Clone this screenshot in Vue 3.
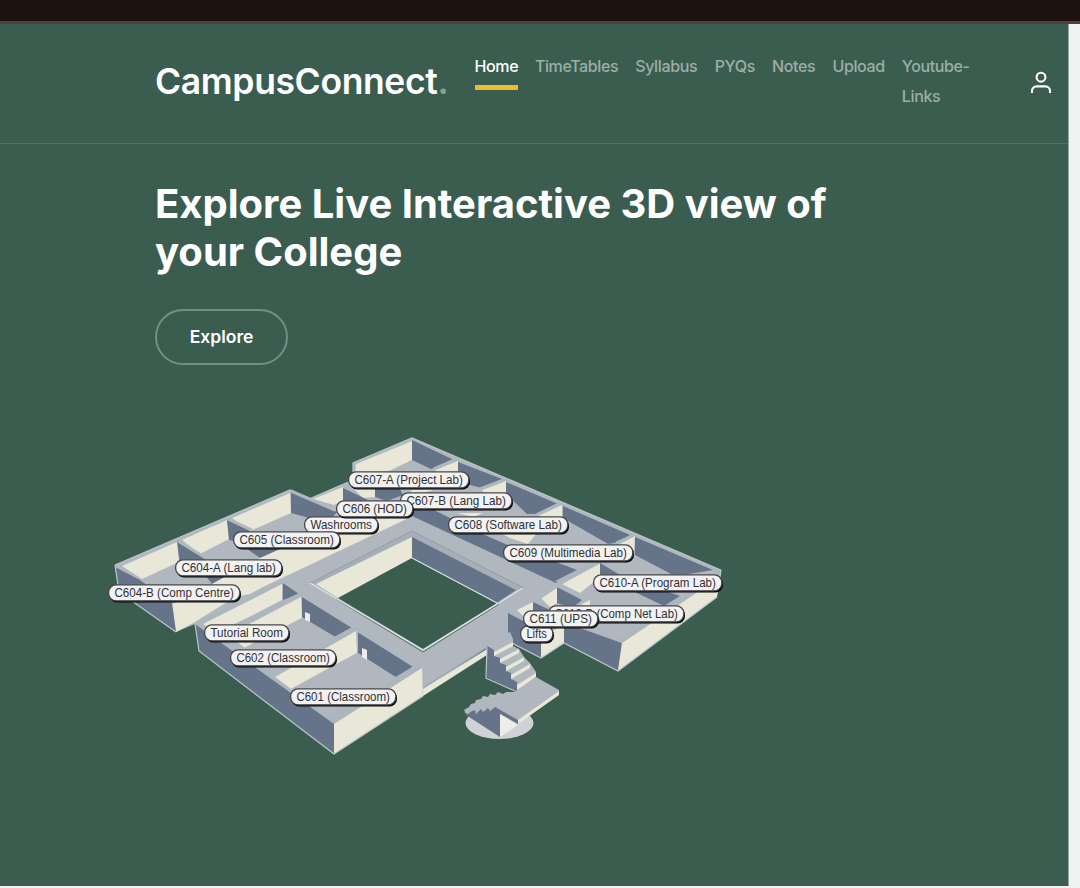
<script setup>
const nav = [
  { label: 'Home', w: 43 }, { label: 'TimeTables', w: 83 }, { label: 'Syllabus', w: 62 },
  { label: 'PYQs', w: 40 }, { label: 'Notes', w: 43 }, { label: 'Upload', w: 52 }, { label: 'Youtube-Links', w: 68 },
]
const C = 'cream', B = 'blue', G = 'floor', T = 'top'
const shapes = [
  [G, '412,438 721,570 720,577 717,597 618,671 564,643 541,658 508,641 487,648 423,690 334,754 199,651 195,624 176,632 119,592 115,565 290,490 309,499 353,480 353,463'],
  // upper rooms
  [C, '356,464 412,441 412,460 368,481 355,474'],
  [B, '412,440 454,460 447,464 431,469 412,460'],
  [C, '435,470 458,461 458,474 440,480'],
  [B, '458,462 502,479 482,488 470,485 458,474'],
  [C, '482,490 506,481 506,494 490,502'],
  [C, '457,513 483,513 473,517'],
  [B, '506,482 558,504 537,514 527,514 506,494'],
  [C, '538,516 562,505 562,517 552,523'],
  [C, '500,533 537,533 528,544 510,538'],
  [B, '563,506 630,535 620,542 608,544 563,518'],
  [C, '618,545 635,536 634,550'],
  [B, '635,537 713,570 683,575 673,575 635,555'],
  [C, '352,487 375,487 375,497 363,498'],
  [B, '375,489 400,489 403,495 387,501 375,497'],
  [C, '412,490 434,490 407,497'],
  [B, '412,504 420,503 450,518 480,533 510,546 540,556 577,570 556,583 412,516'],
  [C, '562,584 600,563 600,577 580,593'],
  [T, '555,581 597,560 601,563 562,584'],
  [B, '600,563 620,575 680,596 664,606 635,592 600,577'],
  [C, '540,597 557,587 557,603 550,607'],
  [B, '557,587 582,600 572,608 557,603'],
  [C, '580,605 590,600 590,607'],
  [C, '517,610 533,602 533,612 523,616'],
  [B, '533,602 552,611 543,614 533,612'],
  [B, '508,613 525,622 541,636 541,658 508,641'],
  [C, '541,637 564,625 564,643 541,658'],
  [B, '564,620 577,627 622,643 618,671 564,643'],
  [C, '622,643 717,577 720,576 717,597 618,671'],
  [T, '614,640 712,576 721,570 720,577 622,643'],
  // left wing
  [C, '122,566 177,542 179,562 142,579'],
  [C, '182,540 227,520 229,539 200,554'],
  [C, '232,518 290,493 291,513 250,531'],
  [B, '177,541 213,564 180,564'],
  [B, '227,520 250,531 240,542 229,540'],
  [B, '291,492 337,512 330,520 313,519 291,513'],
  [C, '313,499 343,487 343,501 334,505'],
  [B, '343,488 368,500 350,504 343,501'],
  [B, '205,575 228,575 212,584'],
  [B, '246,548 287,548 260,558'],
  [C, '212,584 260,558 300,540 345,530 375,517 413,516 263,587 250,594 212,601'],
  [C, '172,604 212,590 262,580 195,622 176,632'],
  [B, '115,567 140,580 172,603 176,632 119,592'],
  // lower wing
  [T, '195,623 281,582 335,716 334,724'],
  [C, '203,624 282,584 282,600 232,626 215,632'],
  [B, '283,583 299,594 283,600'],
  [T, '220,631 299,593 303,597 228,638'],
  [C, '228,635 301,597 302,618 245,648'],
  [B, '302,597 352,628 337,638 302,617'],
  [G, '302,618 337,638 271,672 240,650'],
  [T, '269,673 352,627 357,631 276,677'],
  [C, '275,677 356,631 357,653 291,689'],
  [B, '358,632 413,667 397,678 358,653'],
  [G, '357,653 397,678 328,718 291,689'],
  [T, '328,718 417,664 422,668 334,724'],
  [C, '334,724 422,668 423,696 334,754'],
  [B, '195,624 334,724 334,754 199,651'],
  ['door', '305,612 310,614 310,622 305,620'],
  ['door', '362,648 367,650 367,660 362,657'],
  // courtyard
  ['band', '310,583 412,531 524,588 518,591 412,537 317,584'],
  [C, '316,584 412,537 412,558 338,598'],
  [B, '412,537 516,590 497,603 412,558'],
  ['green', '338,598 412,558 497,603 423,649'],
  [C, '423,689 487,649 487,655 423,696'],
]
const stairs = [
  [G, '487,643 510,632 513,639 513,646 519,649 524,657 530,663 536,672 536,677 517,692 494,656'],
  [B, '487,646 494,650 494,656 500,658 500,663 506,665 506,671 511,673 511,679 517,682 517,692 487,677'],
  [C, '494,652 513,642 513,646 494,656'],
  [C, '500,659 519,649 519,653 500,663'],
  [C, '506,667 524,657 524,661 506,671'],
  [C, '511,675 530,664 530,668 511,679'],
  [C, '517,685 536,673 536,677 517,690'],
  [G, '464,710 469,707 471,704 475,703 476,700 481,699 483,696 488,697 490,694 495,695 498,692 503,694 506,692 515,692 536,677 559,690 559,694 518,722 495,712 466,714'],
  [B, '464,712 469,715 470,712 475,710 476,714 481,709 483,712 488,708 490,711 495,707 518,720 518,724 500,714 500,737 466,715'],
  [C, '518,720 559,691 559,695 518,724'],
  ['white', '500,714 518,725 500,737'],
]
const labels = [
  ['C607-B (Lang Lab)', 400, 493, 112], ['C607-A (Project Lab)', 348, 472, 121],
  ['Washrooms', 304, 517, 74], ['C606 (HOD)', 336, 501, 77], ['C605 (Classroom)', 233, 532, 107],
  ['C608 (Software Lab)', 448, 517, 120], ['C604-A (Lang lab)', 175, 560, 107],
  ['C609 (Multimedia Lab)', 503, 545, 130], ['C610-A (Program Lab)', 593, 575, 129],
  ['C604-B (Comp Centre)', 108, 585, 132], ['C610-B (Comp Net Lab)', 548, 606, 136],
  ['Lifts', 520, 626, 33], ['C611 (UPS)', 523, 611, 75],
  ['Tutorial Room', 204, 625, 85], ['C602 (Classroom)', 230, 650, 106], ['C601 (Classroom)', 290, 689, 106],
]
</script>

<template>
  <div class="screen">
    <div class="topbar"></div>
    <main>
      <header>
        <div class="logo">CampusConnect<span>.</span></div>
        <nav>
          <a v-for="(n, i) in nav" :key="n.label" :class="{ active: i === 0 }" :style="{ width: n.w + 'px' }">{{ n.label }}</a>
        </nav>
        <svg class="user" width="22" height="24" viewBox="0 0 22 24">
          <circle cx="11" cy="6.2" r="4.4" />
          <path d="M2 22v-2.2a4.4 4.4 0 0 1 4.4-4.4h9.2a4.4 4.4 0 0 1 4.4 4.4V22" />
        </svg>
      </header>
      <section>
        <h1>Explore Live Interactive 3D view of your College</h1>
        <button>Explore</button>
      </section>
      <svg class="plan" width="1068" height="486" viewBox="0 400 1068 486">
        <polygon v-for="(s, i) in shapes" :key="i" :class="s[0]" :points="s[1]" />
        <path class="edge" d="M115 565L290 490L309 499L353 480M353 474V463L412 438L721 570L720 577M717 597L618 671L564 643L541 658L508 641M115 565L119 592L176 632M195 624L199 651L334 754L423 696" />
        <path class="thin" d="M310 583L412 531L524 588M423 688L487 647" />
        <path class="wallcap" d="M178 541L214 563M228 519L252 530M291 491L335 510M302 595L354 627M357 630L415 666M284 582L300 592M556 585L584 598M600 561L623 573M535 601L557 586" />
        <path class="wallcap" d="M434 469L457 459M480 489L504 480M536 515L561 503M616 543L634 535" />
        <path class="shade" d="M336 599L423 652L499 604" />
        <path class="rim" d="M310 583L423 650L523 588M412 558L497 603" />
        <ellipse class="disc" cx="499.500" cy="723" rx="34" ry="16" />
        <polygon v-for="(s, i) in stairs" :key="'s' + i" :class="s[0]" :points="s[1]" />
        <path class="edge" d="M487 647L486 678L517 692" />
        <g v-for="l in labels" :key="l[0]">
          <rect class="drop" :x="l[1] + 1.5" :y="l[2] + 1.4" :width="l[3] - 0.5" height="16" rx="7.5" />
          <rect class="pill" :x="l[1] + 0.6" :y="l[2] - 0.2" :width="l[3] - 0.8" height="16" rx="7.5" />
          <text :x="l[1] + 6.4" :y="l[2] + 12.2" :textLength="l[3] - 12.5" lengthAdjust="spacingAndGlyphs">{{ l[0] }}</text>
        </g>
      </svg>
    </main>
  </div>
</template>

<style>
body { background: #f0f2f1; overflow: hidden; }
</style>
<style scoped>
.screen { width: 1080px; height: 888px; overflow: hidden; background: #f0f2f1; font-family: Inter, sans-serif; }
.topbar { height: 24px; box-sizing: border-box; background: #1c110f; border-bottom: 3px solid #4d413d; }
main { width: 1069px; height: 862px; box-sizing: border-box; background: #3b5d50; border-right: 1px solid #91a69e; overflow: hidden; }
header { height: 120px; box-sizing: border-box; border-bottom: 1px solid #4e6f62; display: flex; padding-left: 155px; }
.logo { width: 320px; flex: none; margin-top: 36px; font-size: 35.5px; letter-spacing: -0.38px; line-height: 44px; font-weight: 600; color: #fff; white-space: nowrap; }
.logo span { color: #87a096; }
nav { display: flex; gap: 17.4px; margin-top: 27px; height: 70px; width: 556px; flex: none; margin-left: -0.5px; }
nav a { flex: none; color: #9daea7; font-size: 16px; letter-spacing: -0.38px; line-height: 30px; font-weight: 500; }
nav a.active { color: #fff; height: 34px; border-bottom: 5px solid #edbd2e; }
.user { margin-top: 47px; flex: none; margin-left: -1px; fill: none; stroke: #fff; stroke-width: 2.1; }
section { height: 256px; padding: 36px 0 0 155px; box-sizing: border-box; }
h1 { margin: 0; width: 700px; color: #fff; font-size: 40px; line-height: 48px; font-weight: 700; }
button { display: block; margin-top: 33px; width: 133px; height: 56px; border: 2px solid #768e85; border-radius: 28px; background: transparent; color: #fff; font: 600 17.5px Inter, sans-serif; padding: 0 0 2px; }
.plan { display: block; }
.floor { fill: #b0b7be; }
.top { fill: #adb6bd; }
.band { fill: #a6afb7; }
.blue { fill: #66748a; }
.cream { fill: #e8e7d8; }
.door, .white { fill: #edeeea; }
.green { fill: #3b5d50; }
.disc { fill: #d0d3d5; }
.edge { fill: none; stroke: #bac7ca; stroke-width: 1.2; }
.thin { fill: none; stroke: #929faa; stroke-width: 1; }
.wallcap { fill: none; stroke: #aeb8bf; stroke-width: 3; }
.rim { fill: none; stroke: #dce5e3; stroke-width: 1.2; }
.shade { fill: none; stroke: #536c6b; stroke-width: 1; }
.drop { fill: #050606; }
.pill { fill: #f2f2f3; stroke: #454547; stroke-width: 1.3; }
text { font: 11.9px "Liberation Sans", Arial, sans-serif; fill: #303033; }
</style>
